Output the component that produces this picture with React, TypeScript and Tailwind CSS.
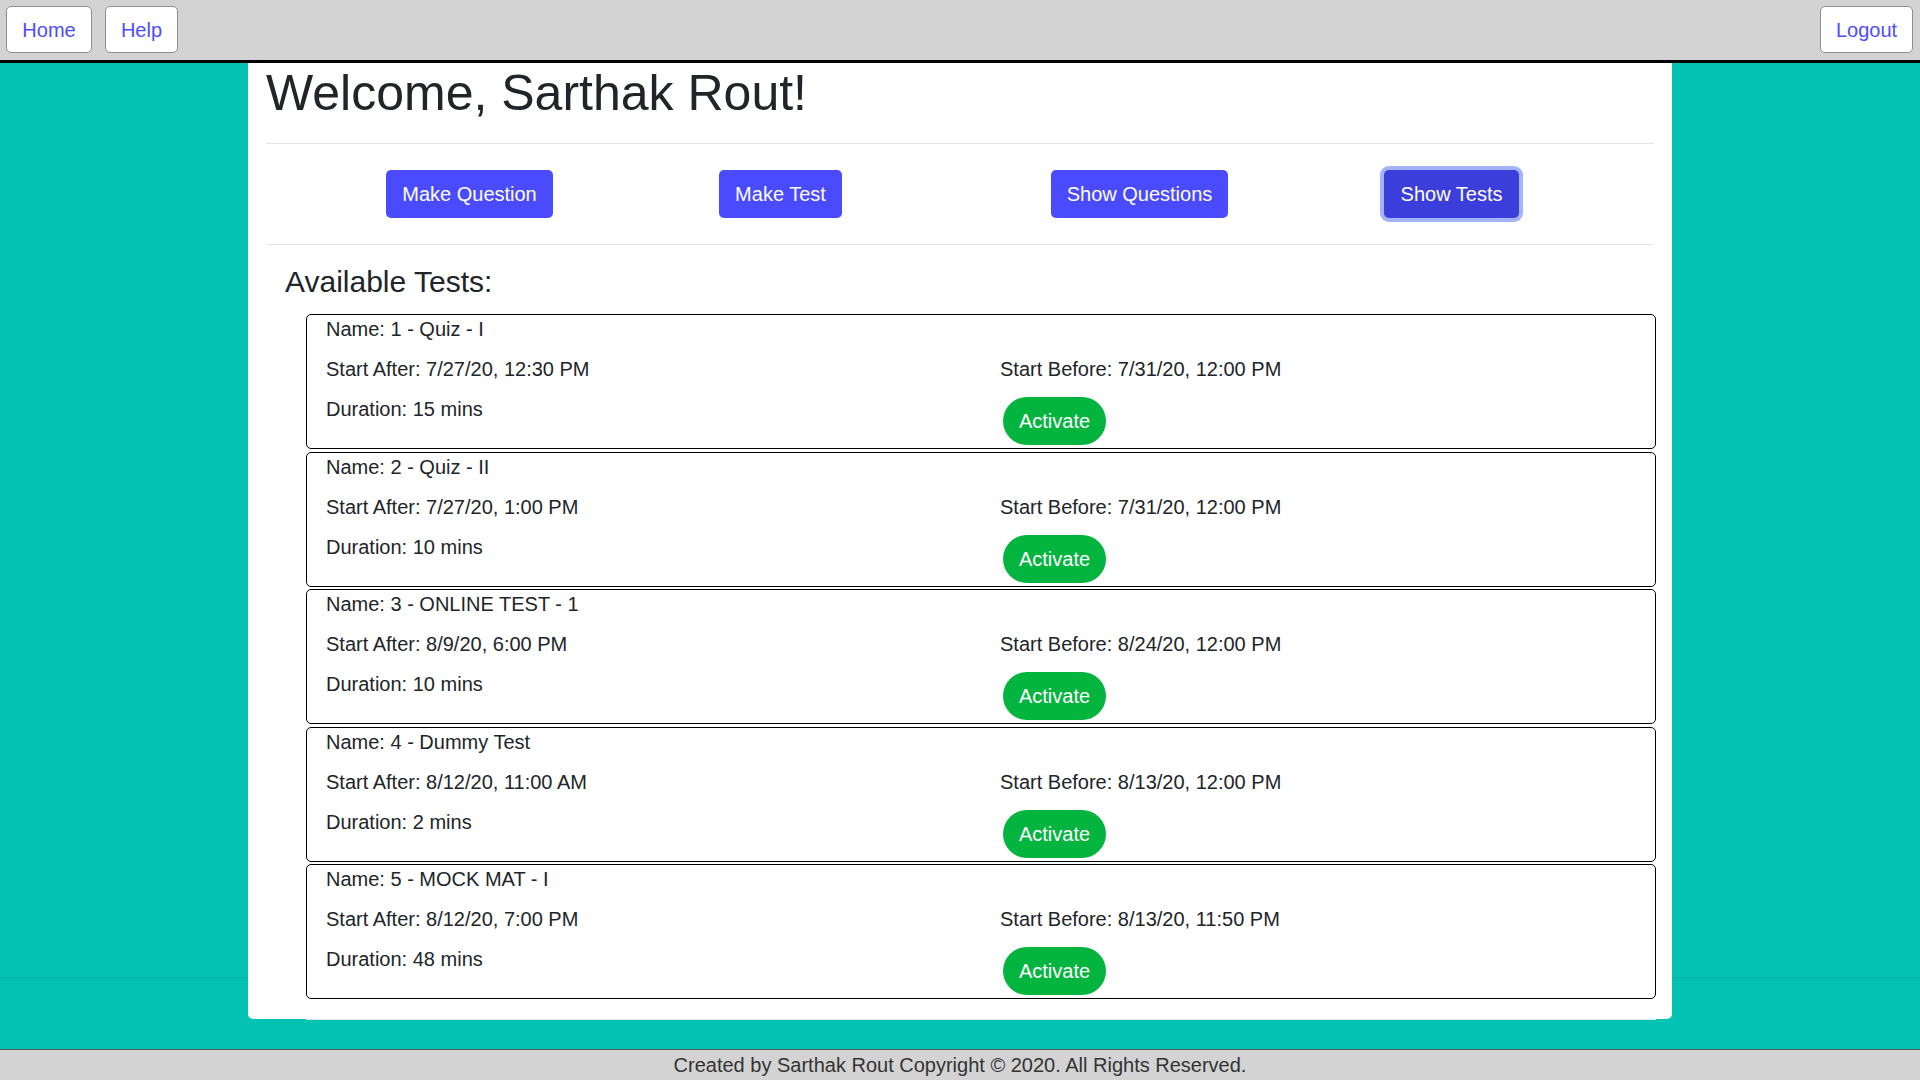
import React from 'react';

interface TestItem {
  name: string;
  startAfter: string;
  startBefore: string;
  duration: string;
}

const tests: TestItem[] = [
  { name: '1 - Quiz - I', startAfter: '7/27/20, 12:30 PM', startBefore: '7/31/20, 12:00 PM', duration: '15 mins' },
  { name: '2 - Quiz - II', startAfter: '7/27/20, 1:00 PM', startBefore: '7/31/20, 12:00 PM', duration: '10 mins' },
  { name: '3 - ONLINE TEST - 1', startAfter: '8/9/20, 6:00 PM', startBefore: '8/24/20, 12:00 PM', duration: '10 mins' },
  { name: '4 - Dummy Test', startAfter: '8/12/20, 11:00 AM', startBefore: '8/13/20, 12:00 PM', duration: '2 mins' },
  { name: '5 - MOCK MAT - I', startAfter: '8/12/20, 7:00 PM', startBefore: '8/13/20, 11:50 PM', duration: '48 mins' },
];

const NavButton = ({ label, width }: { label: string; width: string }) => (
  <button
    className={`${width} h-[47px] rounded-[5px] border border-[#8f8f8f] bg-white text-[20px] leading-[30px] text-[#4d4dff]`}
  >
    {label}
  </button>
);

const TestCard = ({ test }: { test: TestItem }) => (
  <div className="mb-[2.5px] flex h-[135px] flex-col rounded-[5px] border border-black bg-white text-[20px] leading-[30px] text-[#212529]">
    <div className="-mt-px px-[19px]">Name: {test.name}</div>
    <div className="mt-[10px] grid grid-cols-2">
      <div className="px-[19px]">Start After: {test.startAfter}</div>
      <div className="px-[19px]">Start Before: {test.startBefore}</div>
    </div>
    <div className="mt-[10px] grid grid-cols-2">
      <div className="px-[19px]">Duration: {test.duration}</div>
      <div className="px-[19px]">
        <button className="ml-[3px] mt-[3px] h-[48px] w-[103px] rounded-full bg-[#03b43f] text-[20px] leading-[30px] text-white">
          Activate
        </button>
      </div>
    </div>
  </div>
);

export default function App() {
  return (
    <div className="flex min-h-screen flex-col bg-[#02c2b1] font-['Liberation_Sans',Arial,sans-serif]">
      {/* top bar */}
      <nav className="flex h-[63px] items-start justify-between border-b-[3px] border-black bg-[#d3d3d3] pl-[6px] pr-[7px] pt-[6px]">
        <div className="flex gap-[13px]">
          <NavButton label="Home" width="w-[86px]" />
          <NavButton label="Help" width="w-[73px]" />
        </div>
        <NavButton label="Logout" width="w-[93px]" />
      </nav>

      <main className="h-[986px] bg-[linear-gradient(to_bottom,#02c2b1_914px,#00b1a1_914px,#00b1a1_915px,#02c2b1_915px)]">
        <div className="mx-auto h-[956px] w-[1424px] rounded-b-[5px] bg-white px-[18px]">
          <h1 className="text-[50px] leading-[60px] text-[#212529]">Welcome, Sarthak Rout!</h1>
          <hr className="my-[20px] border-t border-[#e5e5e5]" />

          <div className="flex py-[6px] text-[20px] leading-[30px] text-white">
            <button className="ml-[120px] h-[48px] w-[167px] rounded-[5px] bg-[#4a4aff]">Make Question</button>
            <button className="ml-[166px] h-[48px] w-[123px] rounded-[5px] bg-[#4a4aff]">Make Test</button>
            <button className="ml-[209px] h-[48px] w-[177px] rounded-[5px] bg-[#4a4aff]">Show Questions</button>
            <button className="ml-[156px] h-[48px] w-[135px] rounded-[5px] bg-[#3b3edb] shadow-[0_0_0_4px_#a3b4f8]">
              Show Tests
            </button>
          </div>

          <hr className="mt-[20px] border-t border-[#e5e5e5]" />

          <h4 className="ml-[19px] mt-[19px] text-[30px] leading-[36px] text-[#212529]">Available Tests:</h4>

          <div className="ml-[40px] mt-[14px] w-[1350px] border-b border-[#e3e3e3] pb-[17.5px]">
            {tests.map(t => (
              <TestCard key={t.name} test={t} />
            ))}
          </div>
        </div>
      </main>

      <footer className="h-[40px] border-t border-[#5a5a5a] bg-[#d3d3d3] text-center text-[20px] leading-[30px] text-[#333]">
        Created by Sarthak Rout Copyright © 2020. All Rights Reserved.
      </footer>
    </div>
  );
}
